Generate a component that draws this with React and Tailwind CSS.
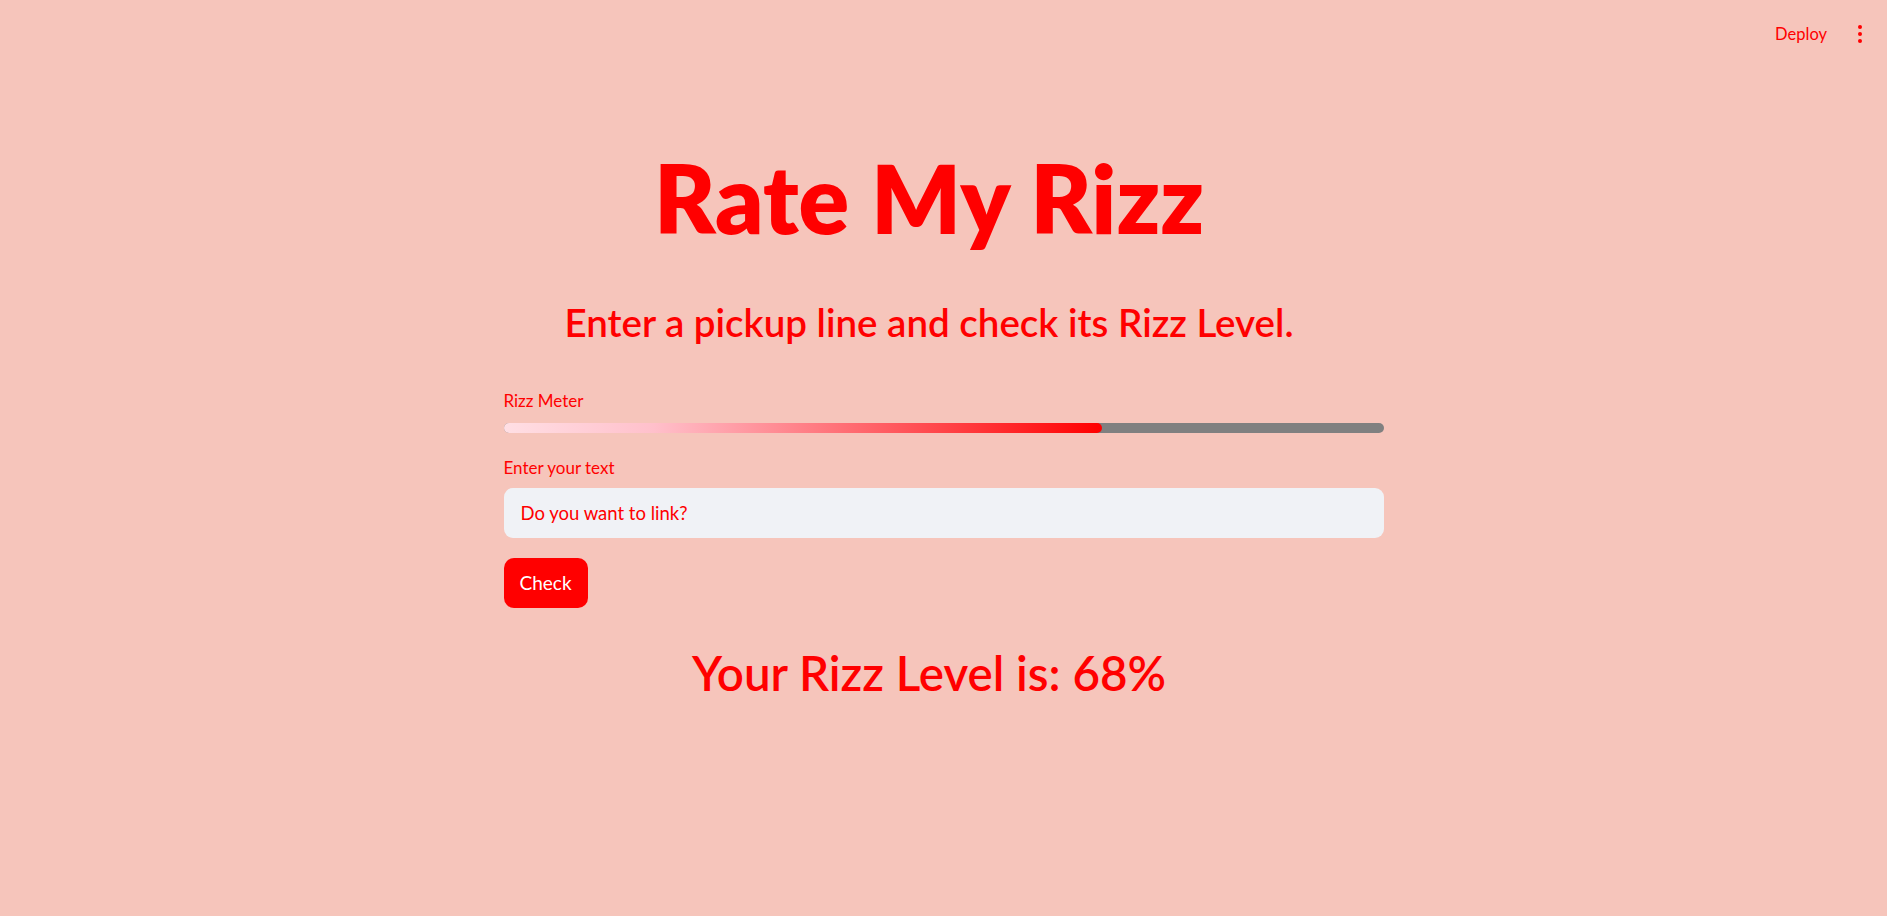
import React, {useState} from 'react'

// Rizz meter page, values are static for now
const RIZZ = 68

export default function App(){
  const [text, setText] = useState('Do you want to link?')

  return (
    <div className="min-h-[916px] bg-[#f6c5bb] text-[#ff0000] font-['Lato','Noto_Sans',sans-serif]">
      <header className="h-[68px] flex items-center justify-end pr-[25px] gap-[31px]">
        <button className="text-[16.5px] leading-none text-[#ff0000]">Deploy</button>
        <div className="flex flex-col gap-[3px]">
          <span className="w-[4px] h-[4px] rounded-full bg-[#ff0000]" />
          <span className="w-[4px] h-[4px] rounded-full bg-[#ff0000]" />
          <span className="w-[4px] h-[4px] rounded-full bg-[#ff0000]" />
        </div>
      </header>

      <main className="w-[880px] mx-auto">
        <h1 className="mt-[83px] pr-[29px] text-center font-extrabold text-[94px] leading-[94px]">Rate My Rizz</h1>
        <h3 className="mt-[55px] pr-[29px] text-center font-semibold text-[38.5px] leading-[44px]">Enter a pickup line and check its Rizz Level.</h3>

        <p className="mt-[47px] text-[17px] leading-[20px]">Rizz Meter</p>
        <div className="mt-[12px] h-[10px] w-full rounded-full bg-[#808080]">
          <div className="h-full rounded-full bg-[linear-gradient(to_right,#ffdfe4,#ffc0cb_25%,#ff0000)]" style={{width: RIZZ + '%'}} />
        </div>

        <p className="mt-[25px] text-[17px] leading-[20px]">Enter your text</p>
        <input
          value={text}
          onChange={e=>setText(e.target.value)}
          className="mt-[10px] w-full h-[50px] rounded-[9px] bg-[#f0f2f6] px-[17px] text-[18.5px] text-[#ff0000] outline-none"
        />

        <button className="mt-[20px] h-[50px] px-[16px] rounded-[10px] bg-[#ff0000] text-white text-[19px]">Check</button>

        <h2 className="mt-[37px] pr-[29px] text-center font-semibold text-[47.5px] leading-[56px]">Your Rizz Level is: {RIZZ}%</h2>
      </main>
    </div>
  )
}
